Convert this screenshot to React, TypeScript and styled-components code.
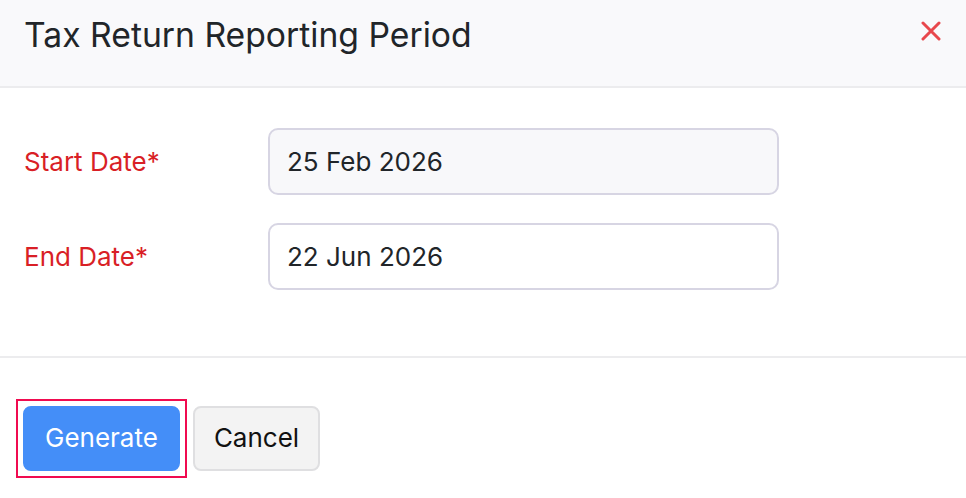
import React from "react";
import styled, { createGlobalStyle } from "styled-components";

const Global = createGlobalStyle`
  html, body { margin: 0; padding: 0; background: #ffffff; }
  body { font-family: Inter, "Noto Sans", sans-serif; -webkit-font-smoothing: antialiased; }
  * { box-sizing: border-box; }
`;

const Dialog = styled.div`
  width: 966px;
  height: 498px;
  display: flex;
  flex-direction: column;
  background: #ffffff;
  overflow: hidden;
`;

const Header = styled.div`
  height: 88px;
  flex: none;
  display: flex;
  align-items: center;
  justify-content: space-between;
  padding: 0 25px 17px 24px;
  background: #f9f9fb;
  border-bottom: 2px solid #ececee;
`;

const Title = styled.h1`
  margin: 0;
  font-size: 33.7px;
  font-weight: 400;
  color: #212529;
  letter-spacing: 0;
  line-height: 1;
`;

const CloseButton = styled.button`
  width: 20px;
  height: 20px;
  margin-bottom: 7px;
  padding: 0;
  border: 0;
  background: transparent;
  display: flex;
  align-items: center;
  justify-content: center;
  cursor: pointer;
`;

const Body = styled.div`
  display: flex;
  flex-direction: column;
  gap: 28px;
  padding: 40px 24px 66px 24px;
  border-bottom: 2px solid #ececee;
`;

const Row = styled.div`
  display: grid;
  grid-template-columns: 244px 511px;
  align-items: center;
`;

const Label = styled.label`
  font-size: 26px;
  color: #d91f26;
  line-height: 1;
`;

const Input = styled.div<{ $disabled?: boolean }>`
  height: 67px;
  display: flex;
  align-items: center;
  padding: 0 17px;
  border: 2px solid #d7d5e3;
  border-radius: 10px;
  background: ${(p) => (p.$disabled ? "#f8f8fa" : "#ffffff")};
  font-size: 26px;
  color: #212529;
`;

const Footer = styled.div`
  display: flex;
  align-items: center;
  gap: 13px;
  padding: 48px 23px 0 23px;
`;

const Button = styled.button<{ $primary?: boolean }>`
  position: relative;
  height: 65px;
  padding: 0 ${(p) => (p.$primary ? "20px" : "19px")} 2px;
  font-family: Inter, "Noto Sans", sans-serif;
  font-size: 26px;
  border-radius: 8px;
  cursor: pointer;
  border: 2px solid ${(p) => (p.$primary ? "#448ef8" : "#dfdfe1")};
  background: ${(p) => (p.$primary ? "#448ef8" : "#f3f3f3")};
  color: ${(p) => (p.$primary ? "#ffffff" : "#111111")};
  outline: none;

  &::before {
    content: "";
    display: ${(p) => (p.$primary ? "block" : "none")};
    position: absolute;
    inset: -9px;
    border: 2px solid #f00b50;
    pointer-events: none;
  }
`;

export default function App() {
  return (
    <>
      <Global />
      <Dialog>
        <Header>
          <Title>Tax Return Reporting Period</Title>
          <CloseButton aria-label="Close">
            <svg width="20" height="20" viewBox="0 0 20 20">
              <path d="M2 2 L18 18 M18 2 L2 18" stroke="#e8474c" strokeWidth="3" strokeLinecap="round" />
            </svg>
          </CloseButton>
        </Header>
        <Body>
          <Row>
            <Label>Start Date*</Label>
            <Input $disabled>25 Feb 2026</Input>
          </Row>
          <Row>
            <Label>End Date*</Label>
            <Input>22 Jun 2026</Input>
          </Row>
        </Body>
        <Footer>
          <Button $primary>Generate</Button>
          <Button>Cancel</Button>
        </Footer>
      </Dialog>
    </>
  );
}
